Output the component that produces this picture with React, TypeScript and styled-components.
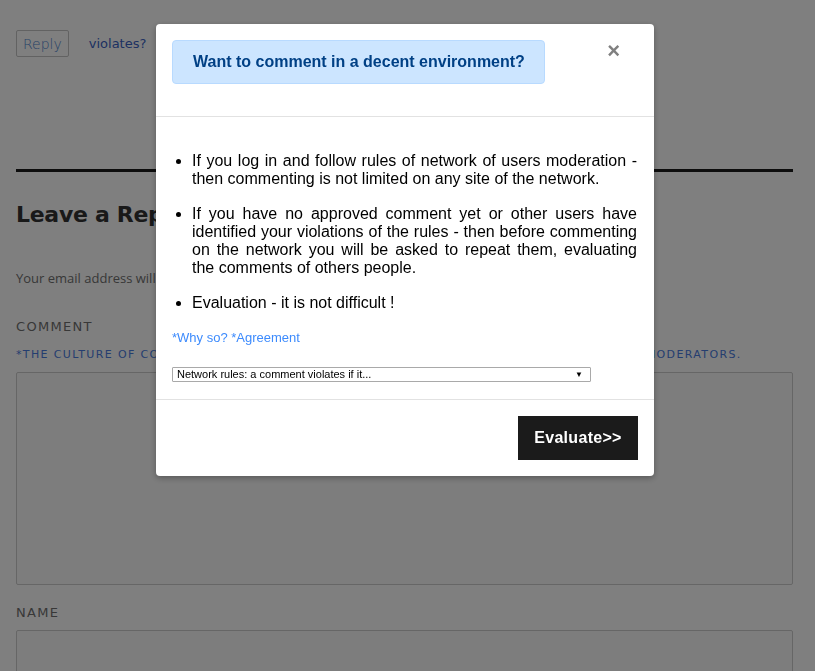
import React from 'react';
import styled, { createGlobalStyle } from 'styled-components';

const GlobalStyle = createGlobalStyle`
	html, body {
		margin: 0;
		padding: 0;
		background: #ffffff;
		overflow: hidden;
	}
	* {
		box-sizing: border-box;
	}
`;

const rules = [
	'If you log in and follow rules of network of users moderation - then commenting is not limited on any site of the network.',
	'If you have no approved comment yet or other users have identified your violations of the rules - then before commenting on the network you will be asked to repeat them, evaluating the comments of others people.',
	'Evaluation - it is not difficult !',
];

const App: React.FC = () => {
	return (
		<>
			<GlobalStyle />
			<Page>
				<ReplyRow>
					<ReplyButton>Reply</ReplyButton>
					<SoftLink>violates?</SoftLink>
				</ReplyRow>
				<Divider />
				<Heading>Leave a Reply</Heading>
				<Note>Your email address will not be published. Required fields are marked *</Note>
				<Label>Comment</Label>
				<Culture>
					*The culture of comments is maintained by the network of users moderation and moderators.
				</Culture>
				<TextArea />
				<Label compact>Name</Label>
				<Input />
			</Page>
			<Overlay>
				<Modal>
					<ModalHeader>
						<TitleBox>Want to comment in a decent environment?</TitleBox>
						<Close>&times;</Close>
					</ModalHeader>
					<ModalBody>
						<RuleList>
							{rules.map((rule) => (
								<Rule key={rule}>{rule}</Rule>
							))}
						</RuleList>
						<Links>
							<a>*Why so?</a> <a>*Agreement</a>
						</Links>
						<Select>
							<span>Network rules: a comment violates if it...</span>
							<Arrow>&#9660;</Arrow>
						</Select>
					</ModalBody>
					<ModalFooter>
						<Evaluate>Evaluate&gt;&gt;</Evaluate>
					</ModalFooter>
				</Modal>
			</Overlay>
		</>
	);
};

const Page = styled.div`
	padding: 30px 22px 0 16px;
	font-family: 'Open Sans', 'Liberation Sans', sans-serif;
`;

const ReplyRow = styled.div`
	display: flex;
	align-items: center;
	gap: 20px;
`;

const ReplyButton = styled.div`
	height: 27px;
	padding: 0 6px;
	display: flex;
	align-items: center;
	border: 1px solid #c4c4c4;
	border-radius: 2px;
	color: #4f86cf;
	font-size: 14px;
	font-family: 'DejaVu Sans', sans-serif;
	font-weight: 300;
`;

const SoftLink = styled.span`
	color: #3a63c4;
	font-size: 13px;
	font-family: 'DejaVu Sans', sans-serif;
`;

const Divider = styled.div`
	height: 3px;
	background: #1a1a1a;
	margin-top: 112px;
`;

const Heading = styled.h2`
	margin: 30px 0 0;
	font-family: 'DejaVu Sans', sans-serif;
	font-size: 22px;
	font-weight: 700;
	color: #333333;
	letter-spacing: -0.3px;
`;

const Note = styled.p`
	margin: 42px 0 0;
	font-size: 13px;
	color: #707070;
`;

const Label = styled.div<{ compact?: boolean }>`
	margin-top: ${({ compact }) => (compact ? '20px' : '32px')};
	font-family: 'DejaVu Sans', sans-serif;
	font-size: 13px;
	letter-spacing: 1.3px;
	text-transform: uppercase;
	color: #707070;
`;

const Culture = styled.div`
	margin-top: 14px;
	white-space: nowrap;
	font-family: 'DejaVu Sans', sans-serif;
	font-size: 11px;
	letter-spacing: 1.37px;
	text-transform: uppercase;
	color: #4b7ce0;
`;

const TextArea = styled.div`
	margin-top: 11px;
	height: 213px;
	border: 1px solid #cccccc;
	border-radius: 2px;
	background: #fbfbfb;
`;

const Input = styled.div`
	margin-top: 10px;
	height: 50px;
	border: 1px solid #cccccc;
	border-radius: 2px;
	background: #fbfbfb;
`;

const Overlay = styled.div`
	position: fixed;
	inset: 0;
	background: rgba(0, 0, 0, 0.5);
	padding-top: 24px;
	font-family: 'Liberation Sans', Arial, sans-serif;
`;

const Modal = styled.div`
	width: 498px;
	margin-left: 156px;
	background: #ffffff;
	border-radius: 4px;
	box-shadow: 0 2px 6px rgba(0, 0, 0, 0.3);
`;

const ModalHeader = styled.div`
	display: flex;
	justify-content: space-between;
	align-items: flex-start;
	padding: 16px 16px 32px;
	border-bottom: 1px solid #e2e2e2;
`;

const TitleBox = styled.div`
	width: 373px;
	height: 44px;
	display: flex;
	align-items: center;
	padding-left: 20px;
	background: #cce5ff;
	border: 1px solid #b8daff;
	border-radius: 4px;
	color: #004085;
	font-size: 16px;
	font-weight: 700;
`;

const Close = styled.span`
	margin: 0 18px 0 0;
	font-size: 22px;
	font-weight: 700;
	line-height: 22px;
	color: #808080;
`;

const ModalBody = styled.div`
	padding: 35px 17px 17px 16px;
`;

const RuleList = styled.ul`
	margin: 0;
	padding-left: 20px;
	font-size: 16px;
	line-height: 17.7px;
	color: #000000;
`;

const Rule = styled.li`
	text-align: justify;
	margin-bottom: 18px;
`;

const Links = styled.div`
	margin-top: 18px;
	font-size: 13px;
	line-height: 15px;
	color: #3d8bfd;
	a {
		color: inherit;
	}
`;

const Select = styled.div`
	margin-top: 22px;
	width: 419px;
	height: 15px;
	display: flex;
	justify-content: space-between;
	align-items: center;
	padding: 0 7px 0 4px;
	border: 1px solid #a9a9a9;
	border-radius: 1px;
	font-size: 11px;
	color: #000000;
`;

const Arrow = styled.span`
	font-size: 8px;
`;

const ModalFooter = styled.div`
	display: flex;
	justify-content: flex-end;
	padding: 16px;
	border-top: 1px solid #e2e2e2;
`;

const Evaluate = styled.button`
	width: 120px;
	height: 44px;
	border: none;
	background: #1b1b1b;
	color: #ffffff;
	font-family: 'Liberation Sans', Arial, sans-serif;
	font-size: 16px;
	font-weight: 700;
	letter-spacing: 0.3px;
`;

export default App;
